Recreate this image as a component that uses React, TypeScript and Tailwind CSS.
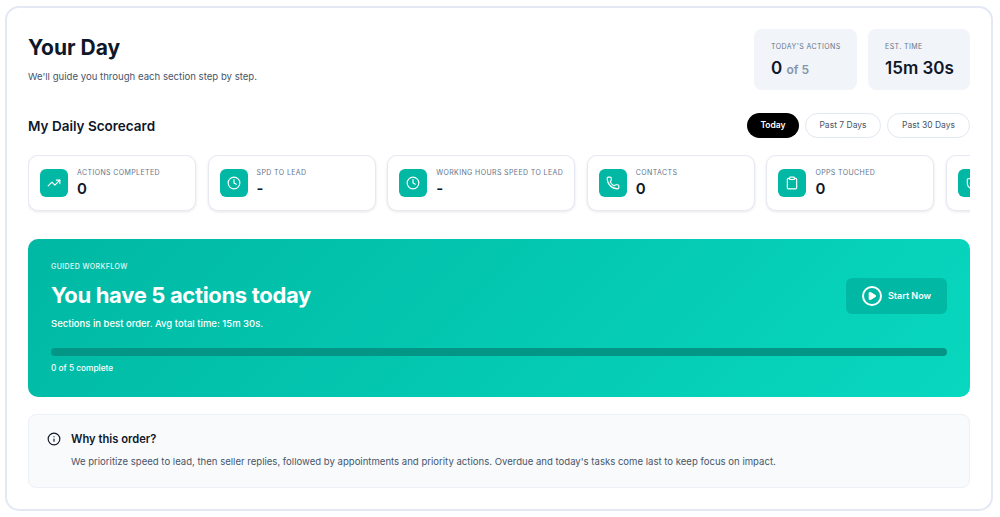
import { Clock, Info, Phone, Play, ShieldCheck, Clipboard, TrendingUp } from 'lucide-react';
import type { LucideIcon } from 'lucide-react';

interface Metric {
  label: string;
  value: string;
  icon: LucideIcon;
}

const metrics: Metric[] = [
  { label: 'Actions Completed', value: '0', icon: TrendingUp },
  { label: 'Spd to Lead', value: '-', icon: Clock },
  { label: 'Working Hours Speed to Lead', value: '-', icon: Clock },
  { label: 'Contacts', value: '0', icon: Phone },
  { label: 'Opps Touched', value: '0', icon: Clipboard },
  { label: '', value: '', icon: ShieldCheck },
];

function StatBox({ label, children, width }: { label: string; children: React.ReactNode; width: string }) {
  return (
    <div className={`${width} h-[61px] rounded-lg bg-[#f1f4f9] pl-[17px] pt-[12px]`}>
      <p className="text-[7px] leading-[12px] uppercase tracking-[0.06em] text-[#64748b]">{label}</p>
      <p className="mt-[2px] text-[17px] leading-[26px] font-semibold text-[#0f172a]">{children}</p>
    </div>
  );
}

function MetricCard({ metric }: { metric: Metric }) {
  const Icon = metric.icon;
  return (
    <div className="flex h-[56px] min-w-[168px] shrink-0 items-center gap-[9px] rounded-[10px] border border-[#e6e9f2] bg-white pl-[11px] pr-[11px] shadow-[0_1px_3px_rgba(15,23,42,0.1)]">
      <div className="flex h-[28px] w-[28px] shrink-0 items-center justify-center rounded-md bg-[#00b8a3]">
        <Icon className="h-[14px] w-[14px] text-white" strokeWidth={2} />
      </div>
      <div>
        <p className="whitespace-nowrap text-[7px] leading-[12px] uppercase tracking-[0.055em] text-[#64748b]">{metric.label}</p>
        <p className="text-[15px] leading-[20px] font-semibold text-[#0f172a]">{metric.value}</p>
      </div>
    </div>
  );
}

export default function App() {
  return (
    <div className="h-[517px] bg-white pl-[5px] pr-[7px] pt-[6px] font-['Inter',sans-serif]">
      <div className="h-[505px] rounded-[14px] border-2 border-[#e4e8f5] bg-white px-[21px] pt-[21px]">
        <div className="flex items-start justify-between">
          <div>
            <h1 className="mt-[5px] text-[21px] leading-[28px] font-bold text-[#0f172a]">Your Day</h1>
            <p className="mt-[7px] text-[9.6px] leading-[16px] text-[#475569]">We'll guide you through each section step by step.</p>
          </div>
          <div className="flex gap-[11px]">
            <StatBox label="Today's Actions" width="w-[103px]">
              0 <span className="text-[12px] text-[#8595ad]">of 5</span>
            </StatBox>
            <StatBox label="Est. Time" width="w-[102px]">
              15m 30s
            </StatBox>
          </div>
        </div>

        <div className="mt-[23px] flex items-center justify-between">
          <h2 className="text-[13.5px] leading-[20px] font-semibold text-[#0f172a]">My Daily Scorecard</h2>
          <div className="flex gap-[6px]">
            <button className="h-[25px] w-[52px] rounded-full bg-black text-[8.5px] font-semibold text-white">Today</button>
            <button className="h-[25px] w-[76px] rounded-full border border-[#e2e8f0] bg-white text-[8.5px] text-[#475569]">Past 7 Days</button>
            <button className="h-[25px] w-[83px] rounded-full border border-[#e2e8f0] bg-white text-[8.5px] text-[#475569]">Past 30 Days</button>
          </div>
        </div>

        <div className="mt-[17px] flex gap-[11.6px] overflow-hidden pb-[3px]">
          {metrics.map((m, i) => (
            <MetricCard key={i} metric={m} />
          ))}
        </div>

        <div className="mt-[25px] h-[158px] rounded-[10px] bg-[linear-gradient(135deg,#00b8a3,#08d8bf)] px-[23px] pt-[22px] text-white">
          <div className="flex items-start justify-between">
            <div>
              <p className="text-[7px] leading-[12px] font-medium uppercase tracking-[0.06em] text-white/90">Guided Workflow</p>
              <h2 className="mt-[8px] text-[22px] leading-[28px] font-bold tracking-[-0.015em]">You have 5 actions today</h2>
              <p className="mt-[8px] text-[9.5px] leading-[14px] font-medium">Sections in best order. Avg total time: 15m 30s.</p>
            </div>
            <button className="mt-[17px] flex h-[36px] w-[101px] items-center justify-center gap-[6px] rounded-md bg-[#00b8a3] text-[9px] font-semibold">
              <span className="flex h-[20px] w-[20px] items-center justify-center rounded-full border-2 border-white">
                <Play className="ml-[1px] h-[10px] w-[10px] fill-white text-white" />
              </span>
              Start Now
            </button>
          </div>
          <div className="mt-[17px] h-[8px] rounded-full bg-[#039686]" />
          <p className="mt-[6px] text-[8.3px] leading-[12px] font-medium">0 of 5 complete</p>
        </div>

        <div className="mt-[17px] h-[74px] rounded-[8px] border border-[#edf0f6] bg-[#f8fafc] pl-[18px] pt-[15px]">
          <div className="flex items-center gap-[10px]">
            <Info className="h-[14px] w-[14px] text-[#0f172a]" strokeWidth={2} />
            <h3 className="text-[11.2px] leading-[18px] font-semibold text-[#0f172a]">Why this order?</h3>
          </div>
          <p className="mt-[6px] pl-[24px] text-[9.57px] leading-[16px] text-[#475569]">
            We prioritize speed to lead, then seller replies, followed by appointments and priority actions. Overdue and today's tasks come last to keep focus on impact.
          </p>
        </div>
      </div>
    </div>
  );
}
